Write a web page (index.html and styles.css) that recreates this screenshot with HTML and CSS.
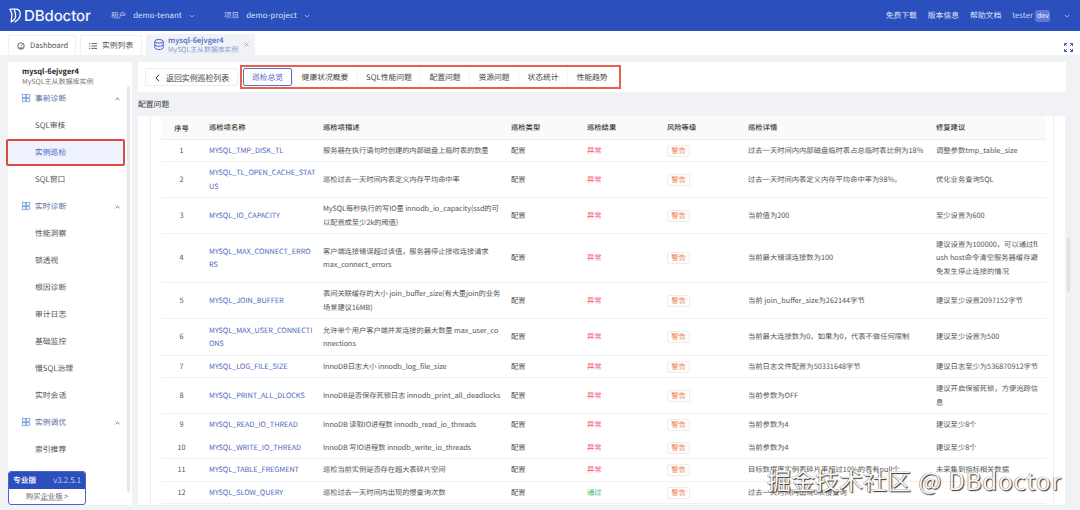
FILE: index.html
```html
<!DOCTYPE html>
<html lang="zh">
<head>
<meta charset="utf-8">
<title>DBdoctor</title>
<link rel="stylesheet" href="styles.css">
</head>
<body>
<div class="app">
  <header class="header">
    <div class="logo">
      <svg class="logo-icon" viewBox="0 0 13 16" fill="none" stroke="#fff" stroke-width="1.4" stroke-linejoin="round"><path d="M.8 1h6.400c3 0 5 2.200 5 5.400 0 3.600-2.200 6.600-6.200 8.800"/><path d="M.8 1l2.400 5.200-.8 8.800 3.400-2.600c1.400-2 1.800-4.200 1.200-6.400L5.600 1"/></svg>
      <span>DBdoctor</span>
    </div>
    <div class="scope scope-tenant"><span class="scope-label">租户</span><span class="scope-value">demo-tenant</span><svg class="chev" viewBox="0 0 8 5"><path d="M1 1l3 3 3-3"/></svg></div>
    <div class="scope scope-project"><span class="scope-label">项目</span><span class="scope-value">demo-project</span><svg class="chev" viewBox="0 0 8 5"><path d="M1 1l3 3 3-3"/></svg></div>
    <nav class="header-right">
      <a>免费下载</a><a>版本信息</a><a>帮助文档</a>
      <span class="user">tester<em class="dev">dev</em></span>
      <svg class="chev chev-user" viewBox="0 0 8 5"><path d="M1 1l3 3 3-3"/></svg>
    </nav>
  </header>

  <div class="tabbar">
    <div class="tab tab-dash">
      <svg class="tab-icon" viewBox="0 0 10 10" fill="none" stroke="#444" stroke-width="1"><circle cx="5" cy="5" r="4"/><path d="M5 5l2-2M2.500 7.500h5"/></svg>Dashboard
    </div>
    <div class="tab tab-list">
      <svg class="tab-icon" viewBox="0 0 10 10" fill="none" stroke="#444" stroke-width="1"><path d="M0 2h1.500M3 2h7M0 5h1.500M3 5h7M0 8h1.500M3 8h7"/></svg>实例列表
    </div>
    <div class="tab tab-active">
      <svg class="db-icon" viewBox="0 0 10 11" fill="none" stroke="#4a63c8" stroke-width="1"><ellipse cx="5" cy="2.300" rx="4.200" ry="1.800"/><path d="M.8 2.300v6.400c0 1 1.900 1.800 4.200 1.800s4.200-.8 4.200-1.800V2.300M.8 5.500c0 1 1.900 1.800 4.200 1.800s4.200-.8 4.200-1.800"/></svg>
      <div class="tab-titles"><b>mysql-6ejvger4</b><small>MySQL主从数据库实例</small></div>
      <svg class="tab-close" viewBox="0 0 6 6"><path d="M.5.5l5 5M5.500.5l-5 5"/></svg>
    </div>
    <svg class="expand" viewBox="0 0 9 9" fill="none" stroke="#3f5fc4" stroke-width="1"><path d="M.5 3V.5H3M.5.5l2.300 2.300M6 .5h2.500V3M8.500.5L6.200 2.800M.5 6v2.500H3M.5 8.500l2.300-2.300M6 8.500h2.500V6M8.500 8.500L6.200 6.200"/></svg>
  </div>

  <div class="content">
    <aside class="sidebar">
      <div class="side-head"><b>mysql-6ejvger4</b><small>MySQL主从数据库实例</small></div>
      <ul class="menu">
        <li class="group">
          <svg class="group-icon" viewBox="0 0 8 8" fill="none" stroke="#6f9be8" stroke-width=".8"><rect x=".5" y=".5" width="3" height="3"/><rect x="4.500" y=".5" width="3" height="3"/><rect x=".5" y="4.500" width="3" height="3"/><rect x="4.500" y="4.500" width="3" height="3"/></svg>事前诊断
          <svg class="up" viewBox="0 0 6 4"><path d="M.7 3.200L3 1l2.300 2.200"/></svg>
        </li>
        <li>SQL审核</li>
        <li class="active">实例巡检</li>
        <li>SQL窗口</li>
        <li class="group">
          <svg class="group-icon" viewBox="0 0 8 8" fill="none" stroke="#6f9be8" stroke-width=".8"><rect x=".5" y=".5" width="3" height="3"/><rect x="4.500" y=".5" width="3" height="3"/><rect x=".5" y="4.500" width="3" height="3"/><rect x="4.500" y="4.500" width="3" height="3"/></svg>实时诊断
          <svg class="up" viewBox="0 0 6 4"><path d="M.7 3.200L3 1l2.300 2.200"/></svg>
        </li>
        <li>性能洞察</li>
        <li>锁透视</li>
        <li>根因诊断</li>
        <li>审计日志</li>
        <li>基础监控</li>
        <li>慢SQL治理</li>
        <li>实时会话</li>
        <li class="group">
          <svg class="group-icon" viewBox="0 0 8 8" fill="none" stroke="#6f9be8" stroke-width=".8"><rect x=".5" y=".5" width="3" height="3"/><rect x="4.500" y=".5" width="3" height="3"/><rect x=".5" y="4.500" width="3" height="3"/><rect x="4.500" y="4.500" width="3" height="3"/></svg>实例调优
          <svg class="up" viewBox="0 0 6 4"><path d="M.7 3.200L3 1l2.300 2.200"/></svg>
        </li>
        <li>索引推荐</li>
      </ul>
      <div class="side-thumb"></div>
      <div class="edition">
        <div class="edition-top"><b>专业版</b><span>v3.2.5.1</span></div>
        <div class="edition-buy">购买<u>企业版</u> &gt;</div>
      </div>
    </aside>

    <main class="main">
      <div class="topbar">
        <button class="back"><svg class="back-icon" viewBox="0 0 5 8"><path d="M4 .8L1 4l3 3.200"/></svg>返回实例巡检列表</button>
        <div class="tabs-box">
          <span class="sub-tab sub-active">巡检总览</span>
          <span class="sub-tab">健康状况概要</span>
          <span class="sub-tab">SQL性能问题</span>
          <span class="sub-tab">配置问题</span>
          <span class="sub-tab">资源问题</span>
          <span class="sub-tab">状态统计</span>
          <span class="sub-tab">性能趋势</span>
        </div>
      </div>
      <h2 class="section-title">配置问题</h2>
      <div class="scroll-row">
        <div class="card">
          <div class="table-wrap">
            <table>
              <colgroup><col class="c-no"><col class="c-name"><col class="c-desc"><col class="c-type"><col class="c-result"><col class="c-risk"><col class="c-detail"><col class="c-fix"></colgroup>
              <thead><tr><th class="no">序号</th><th>巡检项名称</th><th>巡检项描述</th><th>巡检类型</th><th>巡检结果</th><th>风险等级</th><th>巡检详情</th><th>修复建议</th></tr></thead>
              <tbody>
                <tr class="h22"><td class="no">1</td><td class="name">MYSQL_TMP_DISK_TL</td><td>服务器在执行语句时创建的内部磁盘上临时表的数量</td><td>配置</td><td class="bad">异常</td><td><span class="tag">警告</span></td><td>过去一天时间内内部磁盘临时表占总临时表比例为18%</td><td>调整参数tmp_table_size</td></tr>
                <tr class="h36"><td class="no">2</td><td class="name">MYSQL_TL_OPEN_CACHE_STAT<br>US</td><td>巡检过去一天时间内表定义内存平均命中率</td><td>配置</td><td class="bad">异常</td><td><span class="tag">警告</span></td><td>过去一天时间内表定义内存平均命中率为98%。</td><td>优化业务查询SQL</td></tr>
                <tr class="h36"><td class="no">3</td><td class="name">MYSQL_IO_CAPACITY</td><td>MySQL每秒执行的写IO量 innodb_io_capacity(ssd的可<br>以配置成至少2k的阈值)</td><td>配置</td><td class="bad">异常</td><td><span class="tag">警告</span></td><td>当前值为200</td><td>至少设置为600</td></tr>
                <tr class="h49"><td class="no">4</td><td class="name">MYSQL_MAX_CONNECT_ERRO<br>RS</td><td>客户端连接错误超过该值，服务器停止接收连接请求<br>max_connect_errors</td><td>配置</td><td class="bad">异常</td><td><span class="tag">警告</span></td><td>当前最大错误连接数为100</td><td>建议设置为100000，可以通过fl<br>ush host命令清空服务器缓存避<br>免发生停止连接的情况</td></tr>
                <tr class="h36"><td class="no">5</td><td class="name">MYSQL_JOIN_BUFFER</td><td>表间关联缓存的大小 join_buffer_size(有大量join的业务<br>场景建议16MB)</td><td>配置</td><td class="bad">异常</td><td><span class="tag">警告</span></td><td>当前 join_buffer_size为262144字节</td><td>建议至少设置2097152字节</td></tr>
                <tr class="h37"><td class="no">6</td><td class="name">MYSQL_MAX_USER_CONNECTI<br>ONS</td><td>允许单个用户客户端并发连接的最大数量 max_user_co<br>nnections</td><td>配置</td><td class="bad">异常</td><td><span class="tag">警告</span></td><td>当前最大连接数为0。如果为0，代表不做任何限制</td><td>建议至少设置为500</td></tr>
                <tr class="h22"><td class="no">7</td><td class="name">MYSQL_LOG_FILE_SIZE</td><td>InnoDB日志大小 innodb_log_file_size</td><td>配置</td><td class="bad">异常</td><td><span class="tag">警告</span></td><td>当前日志文件配置为50331648字节</td><td>建议日志至少为536870912字节</td></tr>
                <tr class="h36"><td class="no">8</td><td class="name">MYSQL_PRINT_ALL_DLOCKS</td><td>InnoDB是否保存死锁日志 innodb_print_all_deadlocks</td><td>配置</td><td class="bad">异常</td><td><span class="tag">警告</span></td><td>当前参数为OFF</td><td>建议开启保留死锁，方便追踪信<br>息</td></tr>
                <tr class="h23 no-line"><td class="no">9</td><td class="name">MYSQL_READ_IO_THREAD</td><td>InnoDB 读取IO进程数 innodb_read_io_threads</td><td>配置</td><td class="bad">异常</td><td><span class="tag">警告</span></td><td>当前参数为4</td><td>建议至少8个</td></tr>
                <tr class="h22"><td class="no">10</td><td class="name">MYSQL_WRITE_IO_THREAD</td><td>InnoDB 写IO进程数 innodb_write_io_threads</td><td>配置</td><td class="bad">异常</td><td><span class="tag">警告</span></td><td>当前参数为4</td><td>建议至少8个</td></tr>
                <tr class="h23"><td class="no">11</td><td class="name">MYSQL_TABLE_FREGMENT</td><td>巡检当前实例是否存在超大表碎片空间</td><td>配置</td><td class="bad">异常</td><td><span class="tag">警告</span></td><td>目标数据库实例表碎片率超过10%的表有null个</td><td>未采集到指标相关数据</td></tr>
                <tr class="h22"><td class="no">12</td><td class="name">MYSQL_SLOW_QUERY</td><td>巡检过去一天时间内出现的慢查询次数</td><td>配置</td><td class="ok">通过</td><td><span class="tag">警告</span></td><td>过去一天时间内出现0次慢查询</td><td></td></tr>
              </tbody>
            </table>
          </div>
        </div>
        <div class="track"><div class="thumb"></div></div>
      </div>
    </main>
  </div>
  <div class="watermark">掘金技术社区 <span class="wm-latin">@ DBdoctor</span></div>
</div>
</body>
</html>
```

FILE: styles.css
```css
* { box-sizing: border-box; }
html, body { margin: 0; height: 100%; }
body {
  width: 1080px;
  height: 510px;
  overflow: hidden;
  background: #f0f2f5;
  font-family: "Noto Sans CJK SC", "Noto Sans", sans-serif;
  font-size: 7.8px;
  color: #444;
  text-rendering: geometricPrecision;
}
ul { list-style: none; margin: 0; padding: 0; }
.app { position: relative; display: flex; flex-direction: column; height: 510px; overflow: hidden; }

/* header */
.header {
  height: 31px;
  flex: none;
  background: #2b4fbd;
  color: #dfe6f8;
  display: flex;
  align-items: center;
}
.logo { width: 111px; display: flex; align-items: center; gap: 3px; padding-left: 9px; color: #f2f5fd; font-family: Inter, sans-serif; font-size: 15px; font-weight: 500; letter-spacing: -.1px; }
.logo-icon { width: 12px; height: 15px; }
.scope { display: flex; align-items: center; font-size: 7.6px; }
.scope-tenant { width: 113px; }
.scope-label { margin-right: 7px; color: #bcc9ef; }
.scope-value { font-size: 7.8px; letter-spacing: .1px; }
.chev { width: 6px; height: 4px; margin-left: 7px; fill: none; stroke: #bcc9ef; stroke-width: 1; }
.header-right { margin-left: auto; display: flex; align-items: center; gap: 11px; padding-right: 10px; }
.user { display: flex; align-items: center; color: #c9d4f3; font-size: 7.8px; }
.dev { margin-left: 2px; padding: 1px 2px; width: 15px; height: 12px; line-height: 10px; text-align: center; background: #5f7dd6; border-radius: 3px; font-style: normal; color: #e8edfb; font-size: 7px; }
.chev-user { margin-left: 3px; }

/* tabs */
.tabbar { height: 24px; flex: none; background: #fff; display: flex; align-items: flex-end; padding-left: 8px; gap: 4px; position: relative; }
.tab { height: 20px; display: flex; align-items: center; border: 1px solid #f0f1f4; border-bottom: 0; border-radius: 2px 2px 0 0; color: #555; }
.tab-icon { width: 8px; height: 8px; margin-right: 5px; flex: none; }
.tab-dash { width: 68px; padding-left: 8px; font-size: 7.5px; }
.tab-list { width: 62px; padding-left: 8px; }
.tab-active { width: 109px; height: 21px; padding-left: 8px; background: #f0f2f5; border: 0; }
.db-icon { width: 10px; height: 11px; margin-right: 4px; flex: none; }
.tab-titles { display: flex; flex-direction: column; line-height: 9px; }
.tab-titles b { color: #4a63c8; font-weight: 500; font-size: 7.6px; }
.tab-titles small { color: #8c9bd8; font-size: 6.9px; }
.tab-close { width: 5px; height: 5px; margin-left: 6px; stroke: #aab; stroke-width: 1; fill: none; }
.expand { width: 9px; height: 9px; margin-left: auto; margin-right: 7px; align-self: center; margin-top: 8px; }

/* layout */
.content { flex: 1; min-height: 0; display: flex; gap: 6px; padding: 7px 8px 5px; }

/* sidebar */
.sidebar { position: relative; width: 124px; flex: none; background: #fff; }
.side-head { height: 22.5px; padding: 5px 0 0 14px; display: flex; flex-direction: column; line-height: 10px; }
.side-head b { font-weight: 700; color: #222; font-size: 7.5px; }
.side-head small { font-size: 7px; color: #777; }
.menu li { position: relative; height: 27px; line-height: 27px; padding-left: 27px; color: #555; }
.menu .group { display: flex; align-items: center; padding: 0 0 0 14px; color: #5a6b9e; }
.group-icon { width: 8px; height: 8px; margin-right: 5px; }
.up { position: absolute; left: 107px; top: 12px; width: 5px; height: 4px; fill: none; stroke: #444; stroke-width: 1; }
.menu .active { margin-left: -2px; width: 119px; padding-left: 27px; line-height: 23px; background: #eef3fd; color: #4a63c8; border: 2px solid #dd4a44; border-radius: 2px; height: 27px; }
.side-thumb { position: absolute; left: 119px; top: 24px; width: 3px; height: 406px; background: #e4e6ea; border-radius: 2px; }
.edition { position: absolute; left: 0; bottom: 0; width: 78px; height: 34px; border: 1px solid #4a63c8; border-radius: 3px; background: #fff; overflow: hidden; }
.edition-top { height: 17px; background: #2b4fbd; display: flex; justify-content: space-between; align-items: center; padding: 0 4px; color: #c4d0f3; }
.edition-top b { color: #e9eefc; font-weight: 700; }
.edition-buy { text-align: center; line-height: 15px; color: #666; font-size: 7.4px; }
.edition-buy u { text-decoration: underline; text-decoration-color: #bbb; }

/* main */
.main { flex: 1; min-width: 0; display: flex; flex-direction: column; }
.topbar { height: 30px; flex: none; width: 928px; background: #fff; display: flex; align-items: center; padding-left: 7px; gap: 2px; }
.back { width: 93px; height: 18px; display: flex; align-items: center; padding: 1px 0 0 9px; border: 1px solid #eceef2; border-radius: 2px; background: #fff; font: inherit; font-size: 7.9px; color: #444; }
.back-icon { width: 5px; height: 8px; margin-right: 6px; fill: none; stroke: #333; stroke-width: 1; }
.tabs-box { display: flex; align-items: center; height: 24px; width: 381px; padding: 0 0 0 1px; border: 2px solid #e8604c; }
.sub-tab { width: 49px; height: 18px; line-height: 20px; text-align: center; color: #444; flex: none; border-left: 1px solid #f4f5f7; white-space: nowrap; }
.sub-tab:nth-child(2) { width: 65px; }
.sub-tab:nth-child(3) { width: 63px; }
.sub-active { border: 1px solid #5b6fc8; border-radius: 2px; color: #4a63c8; line-height: 18px; background: #fff; }
.section-title { height: 24px; flex: none; margin: 0; line-height: 26px; font-size: 7.8px; font-weight: 400; color: #333; }
.scroll-row { flex: 1; min-height: 0; display: flex; }
.card { width: 928px; background: #fff; padding: 0 12px; overflow: hidden; }
.table-wrap { width: 904px; height: 100%; padding: 0 9px 0 10px; border-left: 1px solid #edeff2; border-right: 1px solid #edeff2; }
.track { flex: 1; padding: 121px 2px 0 2px; }
.thumb { height: 55px; width: 3px; background: #dfe1e5; border-radius: 2px; }

/* table */
table { width: 885px; table-layout: fixed; border-collapse: collapse; font-size: 7.3px; color: #555; }
.c-no { width: 41px; }
.c-name { width: 114px; }
.c-desc { width: 188px; }
.c-type { width: 76px; }
.c-result { width: 80px; }
.c-risk { width: 81px; }
.c-detail { width: 188px; }
.c-fix { width: 117px; }
th { height: 23px; padding: 1px 7px 0; background: #fafafa; font-weight: 500; color: #333; text-align: left; border-bottom: 1px solid #eff0f2; }
td { padding: 3px 0 0 7px; line-height: 13.5px; white-space: nowrap; border-bottom: 1px solid #eff0f2; }
td:nth-child(3) { letter-spacing: -.1px; }
td:nth-child(4) { color: #444; }
.no { text-align: center; padding: 3px 0 0; }
.name { color: #5468c0; letter-spacing: -.05px; }
.bad { color: #ee6270; }
.ok { color: #3cbb6c; }
.h22 { height: 22px; }
.h23 { height: 23px; }
.h36 { height: 36px; }
.h37 { height: 37px; }
.h49 { height: 49px; }
.no-line td { border-bottom-color: transparent; }
.tag { display: inline-block; width: 23px; height: 12px; line-height: 10px; text-align: center; border: 1px solid #efece9; border-radius: 2px; background: #fffcfa; color: #ee8a5c; font-size: 7.3px; }

/* watermark */
.watermark { position: absolute; left: 767px; top: 464px; font-family: "Noto Sans CJK SC", sans-serif; font-size: 24px; line-height: 32px; white-space: nowrap; color: #f6f6f6; text-shadow: 1px 1px 1px #333, -.5px -.5px .5px #777; }
.wm-latin { letter-spacing: .9px; margin-left: 2px; }
```
